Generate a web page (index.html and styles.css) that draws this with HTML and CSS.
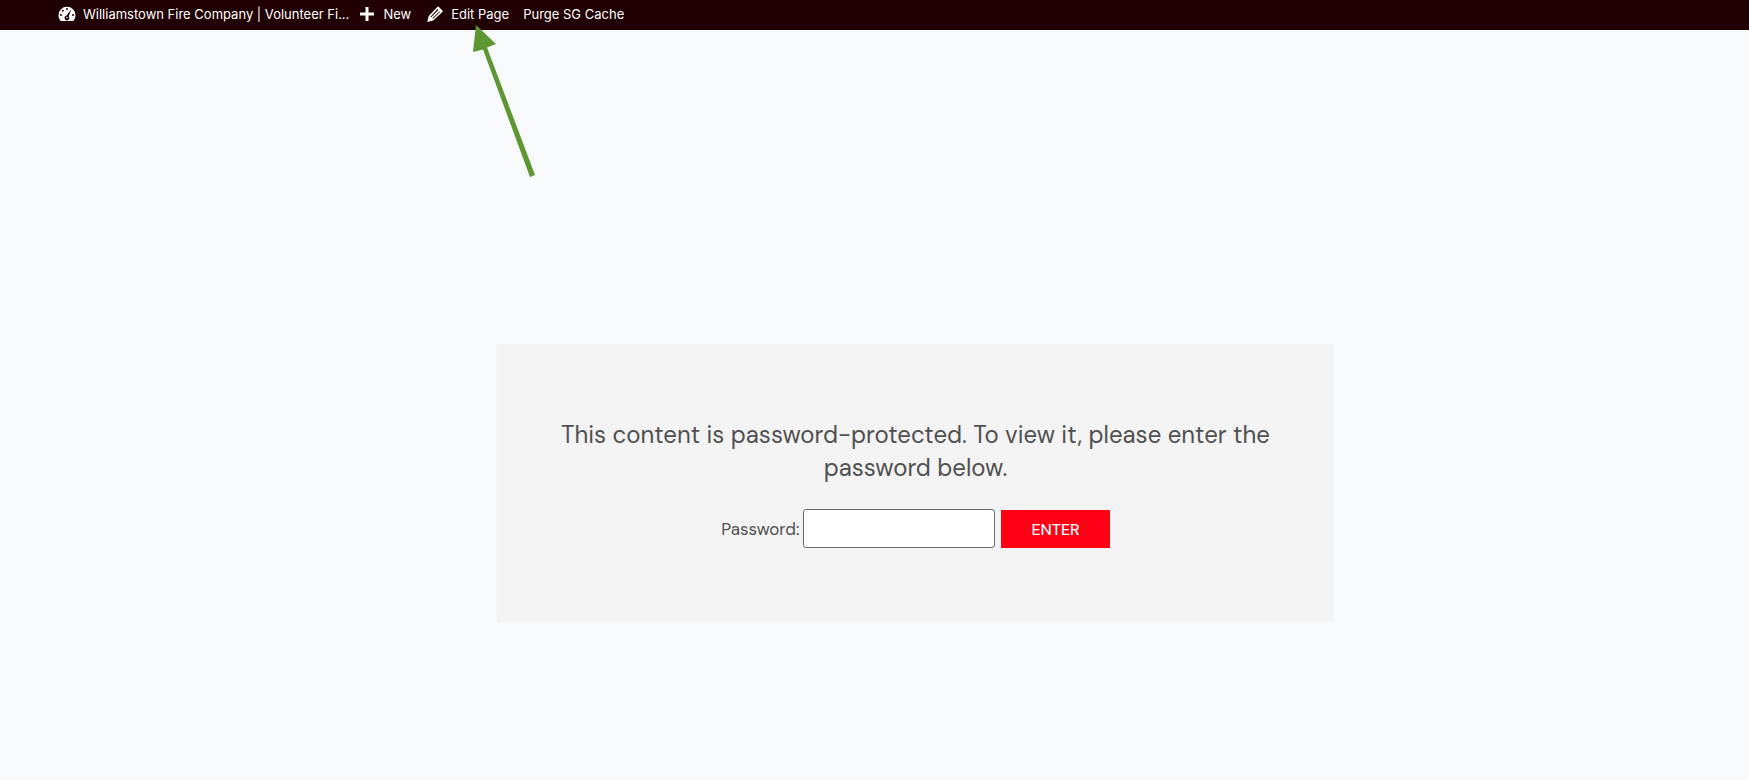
FILE: index.html
```
<!DOCTYPE html>
<html lang="en">
<head>
<meta charset="utf-8">
<meta name="viewport" content="width=device-width, initial-scale=1">
<title>Williamstown Fire Company</title>
<link rel="stylesheet" href="styles.css">
</head>
<body>
<nav class="admin-bar" aria-label="Toolbar">
  <a class="bar-link" href="#">
    <svg class="bar-icon" viewBox="0 0 20 20" aria-hidden="true"><path fill="currentColor" fill-rule="evenodd" d="M3.8 17h12.4c1.4-1.4 2.3-3.6 2.3-5.800A8.500 8.500 0 0 0 1.500 11.200C1.500 13.400 2.400 15.600 3.800 17zM10 4a1 1 0 1 1 0 2 1 1 0 0 1 0-2zM5.800 5.700a1 1 0 1 1 0 2 1 1 0 0 1 0-2zM4 10a1 1 0 1 1 0 2 1 1 0 0 1 0-2zM16 10a1 1 0 1 1 0 2 1 1 0 0 1 0-2zM14.300 5.300l-2.600 7.200a2.300 2.300 0 1 1-2.300-.8z"/><circle cx="10" cy="13.500" r=".8" fill="currentColor"/></svg>
    <span>Williamstown Fire Company | Volunteer Fi...</span>
  </a>
  <div class="bar-actions">
    <a class="bar-link" href="#">
      <svg class="bar-icon" viewBox="0 0 20 20" aria-hidden="true"><path fill="currentColor" d="M17 8.500v3h-5.500V17h-3v-5.500H3v-3h5.500V3h3v5.500z"/></svg>
      <span>New</span>
    </a>
    <a class="bar-link" href="#">
      <svg class="bar-icon" viewBox="0 0 20 20" aria-hidden="true"><path fill="currentColor" fill-rule="evenodd" d="M13.900 2.900l3.100 3.100c.8.800.8 1.500.1 2.300l-9 8.300L2.200 18l1.500-5.900 8.400-8.900c.6-.7 1.200-.9 1.800-.3zM5.300 12.900l1.200.2L13.400 6l-.9-.9zM7.600 14.100l.2.9 7.200-7-.6-.6z"/></svg>
      <span>Edit Page</span>
    </a>
    <a class="bar-link" href="#">Purge SG Cache</a>
  </div>
</nav>
<svg class="pointer" width="64" height="160" viewBox="0 0 64 160" fill="#5d9732" aria-hidden="true">
  <path d="M6 1 26 20 17 23.500 65 151 60 153 13 25.500 3 28z"/>
</svg>
<main class="content">
  <form class="gate">
    <p class="message">This content is password-protected. To view it, please enter the password below.</p>
    <div class="fields">
      <label class="label" for="password">Password:</label>
      <input class="password" id="password" type="password">
      <button class="submit" type="button">ENTER</button>
    </div>
  </form>
</main>
</body>
</html>
```
FILE: styles.css
```
body {
  margin: 0;
  min-height: 100vh;
  display: flex;
  flex-direction: column;
  background: #f8f9fb;
  color: #505050;
  font-family: "DM Sans", Inter, sans-serif;
}

.admin-bar {
  display: flex;
  align-items: center;
  gap: 8px;
  height: 30px;
  box-sizing: border-box;
  padding: 0 0 2px 57px;
  background: #200002;
  font-family: Inter, sans-serif;
  font-size: 13px;
}

.bar-actions {
  display: flex;
  align-items: center;
  gap: 14px;
}

.bar-link {
  display: flex;
  align-items: center;
  gap: 6px;
  color: #fff;
  text-decoration: none;
  white-space: nowrap;
}

.bar-icon {
  width: 20px;
  height: 20px;
}

.pointer {
  position: absolute;
  left: 470px;
  top: 24px;
  overflow: visible;
}

.content {
  flex: 1;
  padding: 314px 0 40px 82px;
}

.gate {
  max-width: 837px;
  box-sizing: border-box;
  margin: 0 auto;
  padding: 74px 60px;
  background: #f3f3f3;
}

.message {
  margin: 0 0 25px;
  font-size: 24px;
  line-height: 33px;
  text-align: center;
}

.fields {
  display: flex;
  flex-wrap: wrap;
  align-items: center;
  justify-content: center;
  font-size: 17px;
}

.label {
  margin-right: 4px;
}

.password {
  width: 192px;
  height: 39px;
  box-sizing: border-box;
  margin-right: 6px;
  padding: 0 8px;
  border: 1px solid #6b6b6b;
  border-radius: 3px;
  background: #fff;
  font: inherit;
}

.submit {
  align-self: flex-end;
  height: 38px;
  padding: 0 30px;
  border: 0;
  background: #ff0014;
  color: #fff;
  font: inherit;
  font-size: 16px;
  font-weight: 500;
}
```
